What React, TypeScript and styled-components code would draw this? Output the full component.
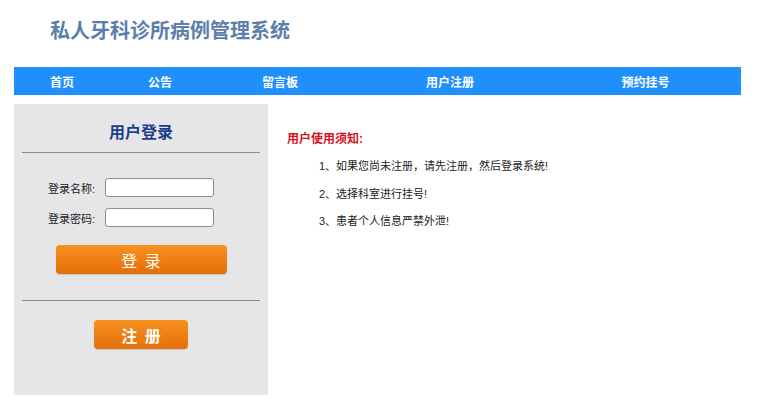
import styled, { createGlobalStyle } from "styled-components";

const GlobalStyle = createGlobalStyle`
  body {
    margin: 0;
    background: #ffffff;
    font-family: "Liberation Sans", "Noto Sans CJK SC", sans-serif;
  }
`;

const Page = styled.div`
  width: 757px;
  padding: 0 16px 0 14px;
  box-sizing: border-box;
`;

const Header = styled.div`
  height: 67px;
  display: flex;
  align-items: center;
  padding-left: 36px;
  box-sizing: border-box;
`;

const Title = styled.h1`
  margin: 0 0 8px;
  font-family: "Liberation Serif", "Noto Sans CJK SC", serif;
  font-size: 20px;
  font-weight: 700;
  color: #5d7eaa;
`;

const Nav = styled.nav`
  display: grid;
  grid-template-columns: 96px 100px 140px 200px 1fr;
  height: 28px;
  background: #1f90fb;
`;

const NavItem = styled.a`
  display: flex;
  align-items: center;
  justify-content: center;
  color: #ffffff;
  font-size: 12px;
  font-weight: 700;
  text-decoration: none;
`;

const Main = styled.div`
  display: flex;
  margin-top: 9px;
  gap: 19px;
`;

const LoginPanel = styled.div`
  width: 254px;
  height: 291px;
  background: #e6e6e9;
  padding: 18px 8px 0;
  box-sizing: border-box;
  display: flex;
  flex-direction: column;
  align-items: center;
`;

const PanelTitle = styled.h2`
  margin: 0;
  font-size: 16px;
  line-height: 22px;
  font-weight: 700;
  color: #1b3d8a;
`;

const Rule = styled.hr<{ $top: number }>`
  align-self: stretch;
  margin: ${(p) => p.$top}px 0 0;
  border: none;
  border-top: 1px solid #8c8c90;
`;

const Form = styled.div`
  align-self: stretch;
  display: flex;
  flex-direction: column;
  gap: 11px;
  margin-top: 25px;
  padding-left: 26px;
`;

const Row = styled.div`
  display: flex;
  align-items: center;
`;

const Label = styled.label`
  width: 57px;
  font-size: 11px;
  color: #222;
`;

const Input = styled.input`
  width: 109px;
  height: 19px;
  box-sizing: border-box;
  border: 1px solid #8e8e8e;
  border-radius: 3px;
  background: #fff;
  padding: 0 4px;
`;

const OrangeButton = styled.button<{ $width: number; $top: number; $bold?: boolean }>`
  width: ${(p) => p.$width}px;
  height: 29px;
  margin-top: ${(p) => p.$top}px;
  border: none;
  border-radius: 4px;
  background: linear-gradient(#f7921e, #e56e0b);
  box-shadow: 0 1px 1px rgba(0, 0, 0, 0.15);
  color: #ffffff;
  font-family: "Noto Sans CJK SC", sans-serif;
  font-size: 16px;
  font-weight: ${(p) => (p.$bold ? 700 : 400)};
  letter-spacing: 2px;
  padding: 0 0 0 2px;
  cursor: pointer;
`;

const Notice = styled.div`
  padding-top: 27px;
`;

const NoticeTitle = styled.h3`
  margin: 0;
  font-size: 12px;
  line-height: 16px;
  font-weight: 700;
  color: #d4121e;
`;

const NoticeList = styled.ol`
  list-style: none;
  margin: 11px 0 0;
  padding-left: 32px;
`;

const NoticeItem = styled.li`
  font-size: 11px;
  line-height: 16px;
  color: #222;
  margin-bottom: 11.5px;
`;

const navItems = ["首页", "公告", "留言板", "用户注册", "预约挂号"];

const notices = [
  "1、如果您尚未注册，请先注册，然后登录系统!",
  "2、选择科室进行挂号!",
  "3、患者个人信息严禁外泄!",
];

export default function App() {
  return (
    <>
      <GlobalStyle />
      <Page>
        <Header>
          <Title>私人牙科诊所病例管理系统</Title>
        </Header>
        <Nav>
          {navItems.map((item) => (
            <NavItem key={item} href="#">
              {item}
            </NavItem>
          ))}
        </Nav>
        <Main>
          <LoginPanel>
            <PanelTitle>用户登录</PanelTitle>
            <Rule $top={8} />
            <Form>
              <Row>
                <Label>登录名称:</Label>
                <Input type="text" />
              </Row>
              <Row>
                <Label>登录密码:</Label>
                <Input type="password" />
              </Row>
            </Form>
            <OrangeButton $width={171} $top={18}>
              登 录
            </OrangeButton>
            <Rule $top={26} />
            <OrangeButton $width={94} $top={19} $bold>
              注 册
            </OrangeButton>
          </LoginPanel>
          <Notice>
            <NoticeTitle>用户使用须知:</NoticeTitle>
            <NoticeList>
              {notices.map((n) => (
                <NoticeItem key={n}>{n}</NoticeItem>
              ))}
            </NoticeList>
          </Notice>
        </Main>
      </Page>
    </>
  );
}
